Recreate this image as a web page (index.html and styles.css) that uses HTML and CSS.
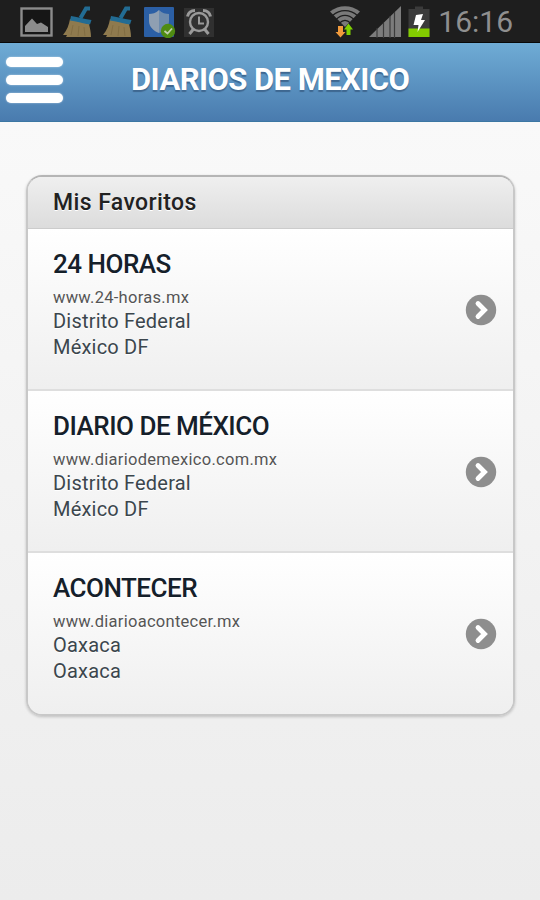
FILE: index.html
```html
<!DOCTYPE html>
<html lang="es">
<head>
    <meta charset="UTF-8">
    <meta name="viewport" content="width=device-width, initial-scale=1.0">
    <title>Diarios de Mexico</title>
    <link rel="stylesheet" href="styles.css">
</head>
<body>
    <svg class="defs" width="0" height="0" aria-hidden="true">
        <symbol id="broom" viewBox="0 0 30 32">
            <path d="M7 13 L26 18 C27 22 28 27 28 31 L3 31 L4 29 L0 29 C4 24 6 19 7 13 Z" fill="#8f7a4e"/>
            <path d="M10 19 L8 29 M16 20 L15 30 M21 21 L22 30" stroke="#7d6a40" stroke-width="0.8" fill="none"/>
            <path d="M8 10 C13 10.500 20 13 28.500 14 L27 18.500 C19 17.500 13 15 7 14.500 Z" fill="#226c94"/>
            <path d="M17.500 12 L23 2.500 H27" fill="none" stroke="#226c94" stroke-width="4"/>
        </symbol>
        <symbol id="arrow" viewBox="0 0 32 32">
            <circle cx="16" cy="16" r="15.2" fill="#8e8e8e"/>
            <path d="M13 9.500 L19.500 16 L13 22.500" fill="none" stroke="#fff" stroke-width="4.8" stroke-linecap="round"/>
        </symbol>
    </svg>

    <div class="status-bar">
        <div class="status-left">
            <svg width="33" height="31" viewBox="0 0 33 31">
                <rect x="1.5" y="2.5" width="30" height="27" fill="#161616" stroke="#8c8c8c" stroke-width="2.4"/>
                <path d="M5 26 V20 L12 12.500 L17 18 L21 16.500 L28 21 V26 Z" fill="#8c8c8c"/>
            </svg>
            <svg class="broom" width="30" height="32"><use href="#broom"/></svg>
            <svg class="broom" width="30" height="32"><use href="#broom"/></svg>
            <svg width="32" height="32" viewBox="0 0 32 32">
                <rect y="1" width="30" height="30" rx="1" fill="#2b5fa5"/>
                <path d="M15 4 C12 7 8 8 5 8 V15 C5 21 10 25 15 27 Z" fill="#8f9fb2"/>
                <path d="M15 4 C18 7 22 8 25 8 V15 C25 21 20 25 15 27 Z" fill="#6d8bad"/>
                <circle cx="24" cy="25" r="7.2" fill="#4f8c12"/>
                <path d="M20.500 25 L23.500 27.500 L28 22.500" fill="none" stroke="#c0cfac" stroke-width="1.8"/>
            </svg>
            <svg class="alarm" width="30" height="30" viewBox="0 0 30 30">
                <rect width="30" height="29" fill="#303030"/>
                <g fill="none" stroke="#9a9a9a" stroke-width="2.4">
                    <circle cx="15" cy="14" r="9"/>
                    <path d="M3.500 8.500 C4 5 7 2.500 11 2.500 M26.500 8.500 C26 5 23 2.500 19 2.500" stroke-width="3"/>
                    <path d="M9.500 21 L5.500 26 M20.500 21 L24.500 26" stroke-width="3"/>
                    <path d="M15 8.500 V15.500 H20" stroke-width="2"/>
                </g>
            </svg>
        </div>
        <div class="status-right">
            <svg class="wifi" width="30" height="32" viewBox="0 0 30 32">
                <path d="M0 5.500 C9 -1.500 21 -1.500 30 5.500 L15 21 Z" fill="#7a7a7a"/>
                <g fill="none" stroke="#1e1e1e" stroke-width="1.200">
                    <path d="M2.500 9.500 C10 3 20 3 27.500 9.500"/>
                    <path d="M6 13.500 C11.500 8 18.500 8 24 13.500"/>
                    <path d="M9.500 17 C13 13.500 17 13.500 20.500 17"/>
                </g>
                <path d="M8 20 H13 V26 H15.500 L10.500 31.500 L5.500 26 H8 Z" fill="#f29b3c"/>
                <path d="M16.500 29 V23.500 H14 L18.500 17.500 L23 23.500 H20.500 V29 Z" fill="#7fd000"/>
            </svg>
            <svg class="signal" width="33" height="32" viewBox="0 0 33 32">
                <path d="M0 31 L32 0 V31 Z" fill="#7c7c7c"/>
                <path d="M8 22 V32 M14.500 17 V32 M21 10 V32 M25.500 6 V32" stroke="#3c3c3c" stroke-width="1.200"/>
            </svg>
            <svg class="battery" width="22" height="32" viewBox="0 0 22 32">
                <path d="M7 0.500 H15 V3 H21.500 V31 H0.500 V3 H7 Z" fill="#3b3b3b"/>
                <rect x="0.500" y="22.500" width="21" height="8.500" fill="#83cc00"/>
                <path d="M8 9 L15 8 L13 14 L17 14 L9.500 26 L10.500 19 L5.500 19 Z" fill="#fff"/>
            </svg>
            <span class="clock">16:16</span>
        </div>
    </div>

    <header class="header">
        <button class="menu-btn" aria-label="Menú">
            <span></span>
            <span></span>
            <span></span>
        </button>
        <h1>DIARIOS DE MEXICO</h1>
    </header>

    <div class="content">
        <ul class="list">
            <li class="divider"><span>Mis Favoritos</span></li>
            <li class="item">
                <div class="info">
                    <h2><span>24 HORAS</span></h2>
                    <p class="url"><span>www.24-horas.mx</span></p>
                    <p><span>Distrito Federal</span></p>
                    <p><span>México DF</span></p>
                </div>
                <svg width="32" height="32"><use href="#arrow"/></svg>
            </li>
            <li class="item">
                <div class="info">
                    <h2><span>DIARIO DE MÉXICO</span></h2>
                    <p class="url"><span>www.diariodemexico.com.mx</span></p>
                    <p><span>Distrito Federal</span></p>
                    <p><span>México DF</span></p>
                </div>
                <svg width="32" height="32"><use href="#arrow"/></svg>
            </li>
            <li class="item">
                <div class="info">
                    <h2><span>ACONTECER</span></h2>
                    <p class="url"><span>www.diarioacontecer.mx</span></p>
                    <p><span>Oaxaca</span></p>
                    <p><span>Oaxaca</span></p>
                </div>
                <svg width="32" height="32"><use href="#arrow"/></svg>
            </li>
        </ul>
    </div>
</body>
</html>
```
FILE: styles.css
```css
* {
    box-sizing: border-box;
}
body {
    margin: 0;
    height: 900px;
    overflow: hidden;
    font-family: Roboto, Arial, sans-serif;
    color: #333;
    background: linear-gradient(#f9f9f9 122px, #ececec 900px);
}
h1, h2, p, ul {
    margin: 0;
    padding: 0;
}
.defs {
    display: block;
}
.status-bar {
    height: 43px;
    padding: 0 27px 0 20px;
    display: flex;
    justify-content: space-between;
    background: #1e1e1e;
    border-bottom: 1px solid #090909;
}
.status-left, .status-right {
    display: flex;
    align-items: flex-start;
    padding-top: 6px;
}
.status-left {
    gap: 11px;
}
.status-left .broom {
    margin-left: -1px;
}
.alarm {
    margin-left: -3px;
    margin-top: 2px;
}
.signal {
    margin-left: 9px;
}
.battery {
    margin-left: 6px;
}
.clock {
    margin-left: 8px;
    font-size: 30px;
    line-height: 31px;
    font-weight: 400;
    color: #8f8f8f;
}
.header {
    height: 79px;
    display: flex;
    align-items: center;
    background: linear-gradient(#6facd5, #497bae);
    border-bottom: 1px solid #3c77a3;
}
.menu-btn {
    width: 57px;
    margin-left: 6px;
    padding: 0 0 4px;
    border: none;
    background: none;
    display: flex;
    flex-direction: column;
    gap: 8px;
}
.menu-btn span {
    height: 10px;
    border-radius: 5px;
    background: #fff;
    box-shadow: 0 0 2px rgba(255,255,255,0.6);
}
.header h1 {
    margin-left: 68px;
    padding-bottom: 5px;
    font-size: 31px;
    line-height: 36px;
    font-weight: bold;
    letter-spacing: -0.55px;
    white-space: nowrap;
    color: #fff;
    text-shadow: 0 2px 1px #3e6790;
}
.content {
    padding: 53px 25px 0 26px;
}
.list {
    list-style: none;
    border: 2px solid #c8c8c8;
    border-top-color: #b5b5b5;
    border-radius: 16px;
    overflow: hidden;
    box-shadow: 0 1px 3px rgba(0,0,0,0.2);
}
.divider {
    height: 52px;
    padding-left: 25px;
    font-size: 23px;
    line-height: 51px;
    font-weight: 500;
    letter-spacing: 0.4px;
    color: #222;
    background: linear-gradient(#efefef, #dcdcdc);
    border-bottom: 1px solid #ccc;
    text-shadow: 0 1px 0 #fff;
}
.item {
    height: 162px;
    padding: 0 16px 0 25px;
    display: flex;
    align-items: center;
    justify-content: space-between;
    background: linear-gradient(#fff, #efefef);
    border-bottom: 2px solid #dedede;
    text-shadow: 0 1px 0 #fff;
}
.item > svg {
    margin-top: 2px;
}
.item:last-child {
    border-bottom: none;
    height: 161px;
}
.item:last-child > svg {
    margin-top: 0;
}
.info {
    align-self: flex-start;
    padding-top: 19px;
}
.info h2 {
    font-size: 26px;
    line-height: 32px;
    font-weight: 500;
    letter-spacing: -0.5px;
    color: #15202a;
}
.info p {
    font-size: 20px;
    line-height: 26px;
    letter-spacing: 0.2px;
    color: #3b464d;
}
.info .url {
    margin-top: 8px;
    font-size: 16.5px;
    line-height: 20px;
    letter-spacing: 0.28px;
    color: #555;
}
```
